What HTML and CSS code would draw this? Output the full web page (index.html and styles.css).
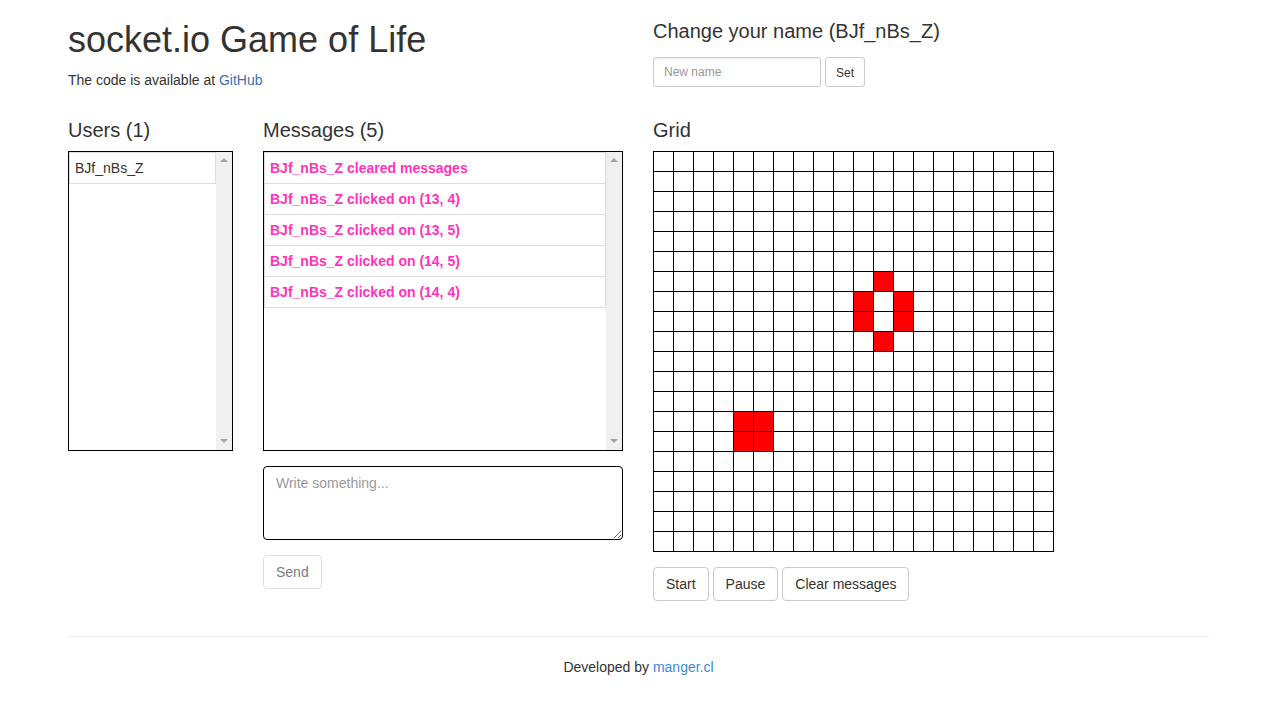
FILE: index.html
```html
<!DOCTYPE html>
<html lang="en">
<head>
    <meta charset="UTF-8">
    <meta name="viewport" content="width=device-width, initial-scale=1.0">
    <title>socket.io Game of Life</title>
    <link rel="stylesheet" href="styles.css">
</head>
<body>
    <div class="container">
        <!-- header -->
        <div class="top-row">
            <div>
                <h1>socket.io Game of Life</h1>
                <p>The code is available at <a href="#" class="gh-link">GitHub</a></p>
            </div>
            <div>
                <h3 class="name-title">Change your name (BJf_nBs_Z)</h3>
                <form class="name-form" onsubmit="return false">
                    <input type="text" class="input-sm" placeholder="New name">
                    <button class="btn btn-sm">Set</button>
                </form>
            </div>
        </div>

        <!-- users / messages / grid -->
        <div class="main-row">
            <div>
                <h3 class="section-title">Users (1)</h3>
                <div class="list-box">
                    <div class="list-content">
                        <div class="list-item">BJf_nBs_Z</div>
                    </div>
                    <div class="scroll-track">
                        <span class="arrow-up"></span>
                        <span class="arrow-down"></span>
                    </div>
                </div>
            </div>
            <div>
                <h3 class="section-title">Messages (5)</h3>
                <div class="list-box messages">
                    <div class="list-content">
                        <div class="list-item">BJf_nBs_Z cleared messages</div>
                        <div class="list-item">BJf_nBs_Z clicked on (13, 4)</div>
                        <div class="list-item">BJf_nBs_Z clicked on (13, 5)</div>
                        <div class="list-item">BJf_nBs_Z clicked on (14, 5)</div>
                        <div class="list-item">BJf_nBs_Z clicked on (14, 4)</div>
                    </div>
                    <div class="scroll-track">
                        <span class="arrow-up"></span>
                        <span class="arrow-down"></span>
                    </div>
                </div>
                <textarea class="msg-input" rows="3" placeholder="Write something..."></textarea>
                <button class="btn send-btn" disabled>Send</button>
            </div>
            <div>
                <h3 class="section-title">Grid</h3>
                <div class="grid" id="grid"></div>
                <div class="grid-buttons">
                    <button class="btn">Start</button>
                    <button class="btn">Pause</button>
                    <button class="btn">Clear messages</button>
                </div>
            </div>
        </div>

        <hr>
        <p class="footer">Developed by <a href="#" class="dev-link">manger.cl</a></p>
    </div>

    <script>
        // 살아있는 칸 (col, row)
        const alive = [
            [11, 6], [10, 7], [12, 7], [10, 8], [12, 8], [11, 9],
            [4, 13], [5, 13], [4, 14], [5, 14]
        ];
        const grid = document.getElementById('grid');
        for (let r = 0; r < 20; r++) {
            for (let c = 0; c < 20; c++) {
                const cell = document.createElement('div');
                cell.className = 'cell';
                if (alive.some(a => a[0] === c && a[1] === r)) {
                    cell.classList.add('alive');
                }
                grid.appendChild(cell);
            }
        }
    </script>
</body>
</html>
```

FILE: styles.css
```css
body {
    font-family: "Liberation Sans", Arial, sans-serif;
    font-size: 14px;
    line-height: 20px;
    color: #333;
    background-color: #fff;
    margin: 0;
}
.container {
    width: 1141px;
    margin: 0 auto;
}
a {
    text-decoration: none;
}
.gh-link {
    color: #3d6fb3;
}
.dev-link {
    color: #3a8bd6;
}
p {
    margin: 0 0 10px;
}
h1 {
    font-size: 36px;
    font-weight: normal;
    line-height: 1.1;
    margin: 20px 0 10px;
}
.top-row, .main-row {
    display: grid;
    gap: 30px;
}
.top-row {
    grid-template-columns: 555px 555px;
}
.main-row {
    grid-template-columns: 165px 360px 555px;
}
.name-title, .section-title {
    font-size: 20px;
    font-weight: normal;
    line-height: 22px;
}
.name-title {
    margin: 20px 0 15px;
}
.section-title {
    margin: 19px 0 10px;
}
.name-form {
    display: flex;
    gap: 4px;
}
.input-sm {
    width: 168px;
    height: 30px;
    box-sizing: border-box;
    padding: 5px 10px;
    font-family: inherit;
    font-size: 12px;
    border: 1px solid #ccc;
    border-radius: 3px;
    box-shadow: inset 0 1px 1px rgba(0, 0, 0, 0.075);
}
.input-sm::placeholder, .msg-input::placeholder {
    color: #999;
}
.btn {
    height: 34px;
    padding: 6px 12px;
    font-family: inherit;
    font-size: 14px;
    line-height: 20px;
    color: #333;
    background-color: #fff;
    border: 1px solid #ccc;
    border-radius: 4px;
    cursor: pointer;
}
.btn-sm {
    height: 30px;
    padding: 5px 10px;
    font-size: 12px;
    border-radius: 3px;
}
.list-box {
    display: flex;
    height: 300px;
    box-sizing: border-box;
    border: 1px solid #000;
}
.list-content {
    flex: 1;
    overflow: hidden;
}
.scroll-track {
    width: 16px;
    display: flex;
    flex-direction: column;
    justify-content: space-between;
    align-items: center;
    background-color: #f0f0f0;
    padding: 6px 0 7px;
}
.arrow-up, .arrow-down {
    width: 0;
    height: 0;
    border-left: 4px solid transparent;
    border-right: 4px solid transparent;
}
.arrow-up {
    border-bottom: 4px solid #a3a3a3;
}
.arrow-down {
    border-top: 4px solid #a3a3a3;
}
.list-item {
    padding: 5px;
    border: 1px solid #ddd;
    margin-bottom: -1px;
}
.messages .list-item {
    color: #f3b;
    font-weight: bold;
}
.msg-input {
    display: block;
    width: 100%;
    height: 74px;
    box-sizing: border-box;
    margin-top: 15px;
    padding: 6px 12px;
    font-family: inherit;
    font-size: 14px;
    line-height: 20px;
    border: 1px solid #000;
    border-radius: 4px;
}
.send-btn {
    margin-top: 15px;
}
.send-btn:disabled {
    opacity: 0.65;
    cursor: not-allowed;
}
.grid {
    display: grid;
    grid-template-columns: repeat(20, 19px);
    grid-auto-rows: 19px;
    gap: 1px;
    width: 401px;
    box-sizing: border-box;
    border: 1px solid #000;
    background-color: #000;
}
.cell {
    background-color: #fff;
}
.cell.alive {
    background-color: #f00;
}
.grid-buttons {
    display: flex;
    gap: 4px;
    margin-top: 15px;
}
hr {
    margin: 35px 0 20px;
    border: 0;
    border-top: 1px solid #eee;
}
.footer {
    text-align: center;
}
```
